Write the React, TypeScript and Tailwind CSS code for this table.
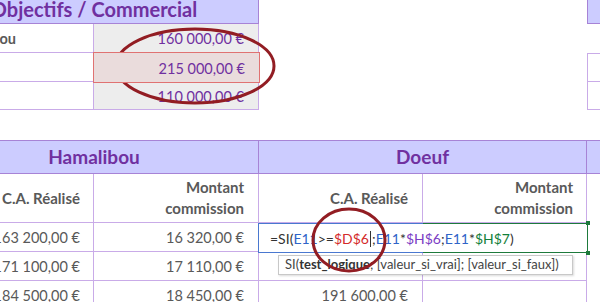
export default function App() {
  const ln = "border-[#c9abe8]";
  const hd = "border-[#a783d6]";
  return (
    <div className="relative w-[600px] h-[302px] overflow-hidden bg-white font-[Lato,sans-serif]">
      <div className="ml-[-70px] w-[670px]">
        {/* top table */}
        <div className="grid grid-cols-[164px_165px_328px_13px] grid-rows-[24px_29px_29px_28px]">
          <div className={`col-span-2 bg-[#ccccff] border-b border-r ${hd} flex items-end justify-center pb-[4px] text-[#7030a0] font-bold text-[20px] leading-none`}>
            Objectifs / Commercial
          </div>
          <div />
          <div className={`bg-[#ccccff] border-l border-b ${hd}`} />

          <div className={`border-r border-b ${ln} flex items-center justify-end pr-[77px] pt-[2px] text-[#595959] font-bold text-[14.5px]`}>
            Hamalibou
          </div>
          <div className={`bg-[#ededed] border-r border-b ${ln} flex items-center justify-end pr-[14px] pt-[2px] text-[#7030a0] text-[14.5px]`}>
            160 000,00 €
          </div>
          <div />
          <div />

          <div className={`border-r border-b ${ln}`} />
          <div className="relative z-10 bg-[#eadcdc] outline outline-1 outline-[#e07272] flex items-center justify-end pr-[14px] pt-[2px] text-[#7030a0] text-[14.5px]">
            215 000,00 €
          </div>
          <div />
          <div className={`border-l border-t border-b ${ln}`} />

          <div className={`border-r border-b ${ln}`} />
          <div className={`bg-[#ededed] border-r border-b ${ln} flex items-center justify-end pr-[14px] pt-[2px] text-[#7030a0] text-[14.5px]`}>
            110 000,00 €
          </div>
          <div />
          <div className={`border-l border-b ${ln}`} />
        </div>

        {/* bottom table */}
        <div className="mt-[30px] grid grid-cols-[164px_165px_164px_164px_13px] grid-rows-[34px_49px_29px_29px_29px]">
          <div className={`col-span-2 bg-[#ccccff] border-t border-b border-r ${hd} flex items-center justify-center text-[#7030a0] font-bold text-[19px]`}>
            Hamalibou
          </div>
          <div className={`col-span-2 bg-[#ccccff] border-t border-b border-r ${hd} flex items-center justify-center text-[#7030a0] font-bold text-[19px]`}>
            Doeuf
          </div>
          <div className={`bg-[#ccccff] border-t border-b ${hd}`} />

          <div className={`border-r border-b ${ln} flex items-center justify-end pr-[13px] text-[#595959] font-bold text-[15px]`}>
            C.A. Réalisé
          </div>
          <div className={`border-r border-b ${ln} flex flex-col justify-center items-end pr-[14px] text-[#595959] font-bold text-[15px] leading-[21px]`}>
            <span>Montant</span>
            <span>commission</span>
          </div>
          <div className={`border-r border-b ${ln} flex items-center justify-end pr-[14px] text-[#595959] font-bold text-[15px]`}>
            C.A. Réalisé
          </div>
          <div className={`border-r border-b ${ln} flex flex-col justify-center items-end pr-[13px] text-[#595959] font-bold text-[15px] leading-[21px]`}>
            <span>Montant</span>
            <span>commission</span>
          </div>
          <div />

          <div className={`border-r border-b ${ln} flex items-center justify-end pr-[13px] pt-[2px] text-[#595959] text-[14.5px]`}>163 200,00 €</div>
          <div className={`border-r border-b ${ln} flex items-center justify-end pr-[14px] pt-[2px] text-[#595959] text-[14.5px]`}>16 320,00 €</div>
          <div className={`border-r border-b ${ln}`} />
          <div className={`border-r border-b ${ln}`} />
          <div />

          <div className={`border-r border-b ${ln} flex items-center justify-end pr-[13px] pt-[2px] text-[#595959] text-[14.5px]`}>171 100,00 €</div>
          <div className={`border-r border-b ${ln} flex items-center justify-end pr-[14px] pt-[2px] text-[#595959] text-[14.5px]`}>17 110,00 €</div>
          <div className={`border-r border-b ${ln}`} />
          <div className={`border-r border-b ${ln}`} />
          <div />

          <div className={`border-r border-b ${ln} flex items-center justify-end pr-[13px] pt-[2px] text-[#595959] text-[14.5px]`}>184 500,00 €</div>
          <div className={`border-r border-b ${ln} flex items-center justify-end pr-[14px] pt-[2px] text-[#595959] text-[14.5px]`}>18 450,00 €</div>
          <div className={`border-r border-b ${ln} flex items-center justify-end pr-[14px] pt-[2px] text-[#595959] text-[14.5px]`}>191 600,00 €</div>
          <div className={`border-r border-b ${ln}`} />
          <div />
        </div>
      </div>

      {/* formula editing overlay */}
      <div className="absolute left-[258px] top-[223px] w-[330px] h-[30px] flex bg-white">
        <div className="w-[165px] h-full border-l border-t border-b border-[#4a78d0]" />
        <div className="flex-1 h-full border-t border-b border-r border-[#1e7a3c]" />
        <div className="absolute inset-0 flex items-center pl-[12px] pt-[1px] text-[14px] text-[#333] whitespace-nowrap">
          <span>=SI(</span>
          <span className="text-[#2f64c8]">E11</span>
          <span>&gt;=</span>
          <span className="text-[#d42a2a]">$D$6</span>
          <span className="inline-block w-px h-[16px] bg-[#333] mx-[1px]" />
          <span>;</span>
          <span className="text-[#2f64c8]">E11</span>
          <span>*</span>
          <span className="text-[#7a3cc4]">$H$6</span>
          <span>;</span>
          <span className="text-[#2f64c8]">E11</span>
          <span>*</span>
          <span className="text-[#12803a]">$H$7</span>
          <span>)</span>
        </div>
        <div className="absolute right-[-2px] top-[-2px] w-[4px] h-[4px] bg-[#1e7a3c]" />
        <div className="absolute right-[-2px] bottom-[-2px] w-[4px] h-[4px] bg-[#1e7a3c]" />
      </div>

      {/* tooltip */}
      <div className="absolute left-[278px] top-[255px] w-[295px] h-[20px] bg-white border border-[#c8c8c8] shadow-[1px_1px_2px_rgba(0,0,0,0.15)] flex items-center pl-[6px] text-[13px] text-[#444] whitespace-nowrap">
        SI(<b className="font-bold text-[#333]">test_logique</b>; [valeur_si_vrai]; [valeur_si_faux])
      </div>

      {/* annotation ellipses */}
      <svg className="absolute inset-0 pointer-events-none" width="600" height="302" viewBox="0 0 600 302">
        <ellipse cx="195" cy="66" rx="79" ry="37" fill="none" stroke="#921d23" strokeWidth="3" />
        <ellipse cx="349" cy="240" rx="36" ry="31" fill="none" stroke="#921d23" strokeWidth="3" />
      </svg>
    </div>
  );
}
